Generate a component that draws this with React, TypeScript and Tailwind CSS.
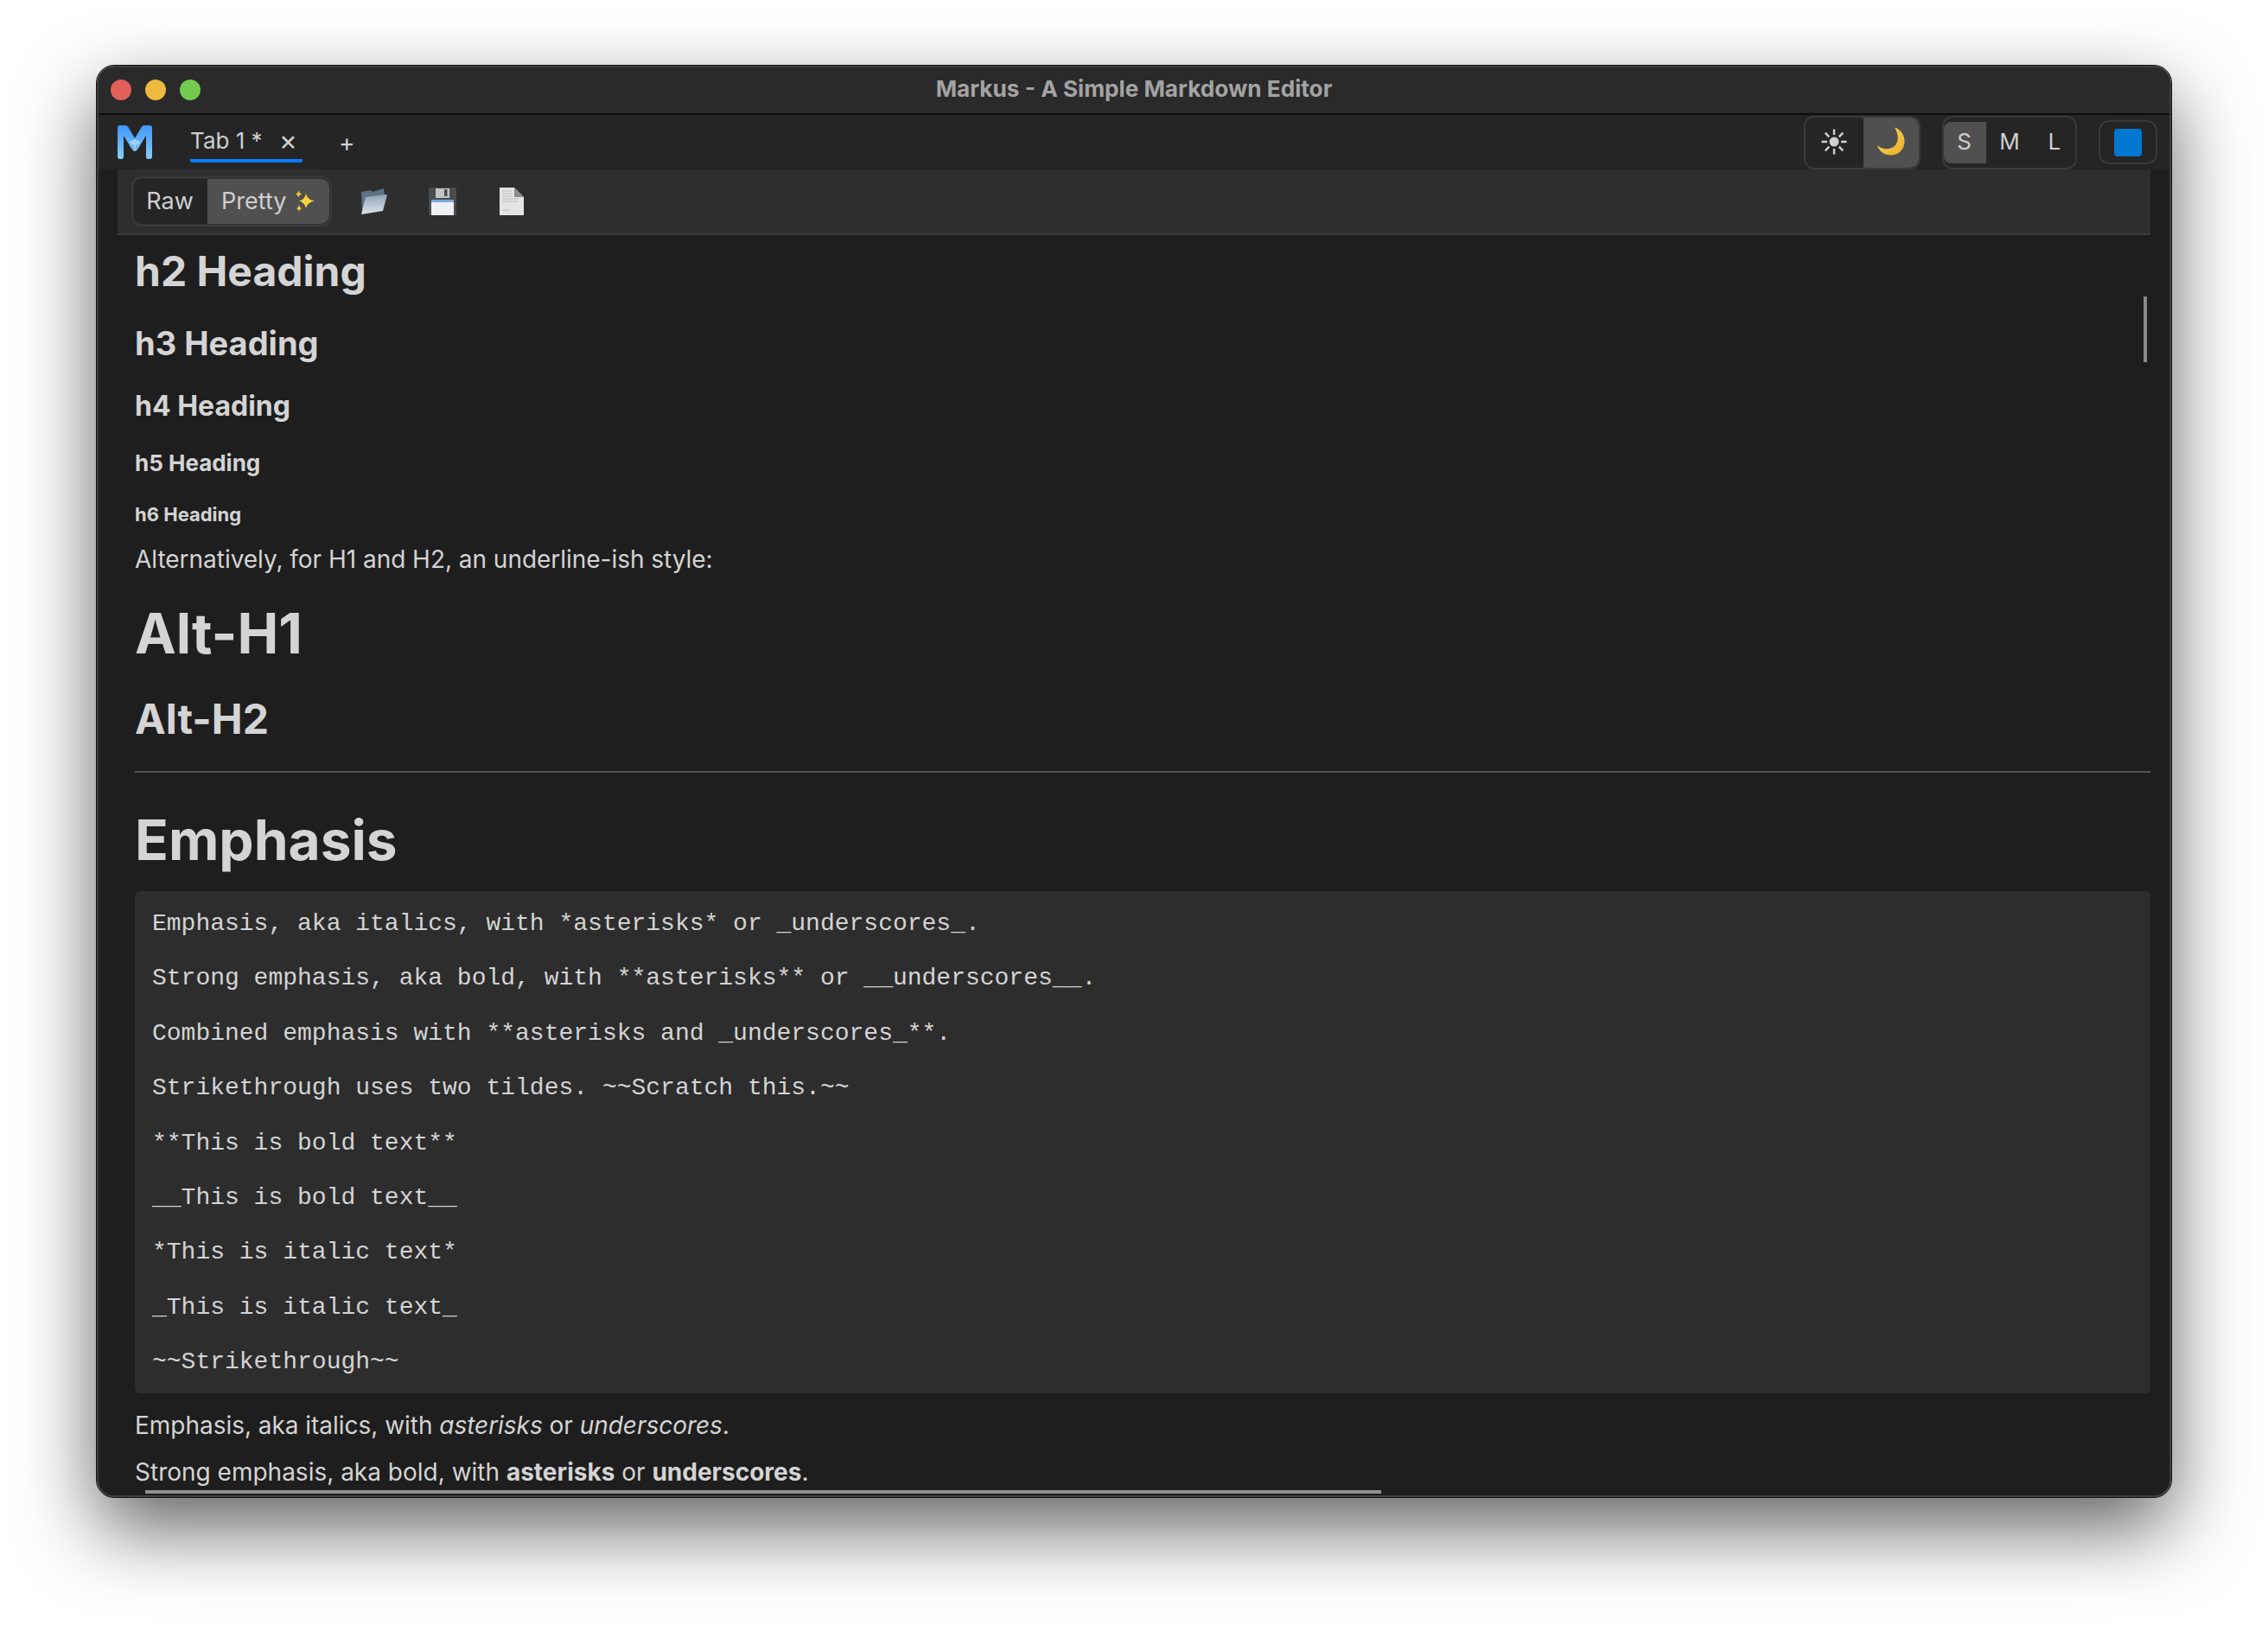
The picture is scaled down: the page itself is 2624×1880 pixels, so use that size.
import React from "react";

const INTER = "font-['Inter',sans-serif]";

function Logo() {
  return (
    <svg width="40" height="39" viewBox="0 0 40 39" className="block">
      <defs>
        <linearGradient id="mg" x1="0" y1="0" x2="0" y2="1">
          <stop offset="0" stopColor="#3f96fb" />
          <stop offset="1" stopColor="#86d0fb" />
        </linearGradient>
        <linearGradient id="gem" x1="0" y1="0" x2="0" y2="1">
          <stop offset="0" stopColor="#a6dcff" />
          <stop offset="1" stopColor="#4fa6ee" />
        </linearGradient>
      </defs>
      <path d="M0 2.5 Q0 0 2.5 0 H9.5 Q11 0 12 1.5 L20 15 L28 1.5 Q29 0 30.5 0 H37.5 Q40 0 40 2.5 V36 Q40 39 37 39 H35.5 Q33 39 33 36 V12 L23 28 Q20 32 17 28 L7 12 V36 Q7 39 4.5 39 H3 Q0 39 0 36 Z" fill="url(#mg)" />
      <path d="M20 16 L25.5 19 V24.5 L20 29 L14.5 24.5 V19 Z" fill="url(#gem)" />
      <path d="M20 21.5 L25.5 19 M20 21.5 L14.5 19 M20 21.5 V29" stroke="#d7f0ff" strokeWidth="0.8" fill="none" />
    </svg>
  );
}

function Sun() {
  return (
    <svg width="30" height="30" viewBox="0 0 30 30" className="block">
      <circle cx="15" cy="15" r="5.5" fill="#d0d0d0" />
      <path d="M15 0.5 V7 M15 23 V29.5 M0.5 15 H7 M23 15 H29.5 M4.7 4.7 L9.3 9.3 M20.7 20.7 L25.3 25.3 M4.7 25.3 L9.3 20.7 M20.7 9.3 L25.3 4.7" stroke="#d0d0d0" strokeWidth="2.4" />
    </svg>
  );
}

function Moon() {
  return (
    <svg width="34" height="34" viewBox="0 0 34 34" className="block">
      <defs>
        <linearGradient id="moon" x1="0" y1="0" x2="1" y2="1">
          <stop offset="0" stopColor="#fbe36a" />
          <stop offset="1" stopColor="#e9a91f" />
        </linearGradient>
      </defs>
      <path d="M21 0.5 C28 3 33 9.5 32.5 17.5 C32 27 24 33 16 32.5 C9 32 3.5 28.5 1 21.5 C6 25.5 13 26.5 19 23.5 C26 19.5 26.5 9 21 0.5 Z" fill="url(#moon)" />
    </svg>
  );
}

function Sparkles() {
  return (
    <svg width="24" height="26" viewBox="0 0 24 26" className="block">
      <path d="M13 4 Q14.5 11 23 12.5 Q14.5 14 13 21 Q11.5 14 5 12.5 Q11.5 11 13 4 Z" fill="#fbd23d" />
      <path d="M4.5 0.5 Q5 3.7 8 4.5 Q5 5.3 4.5 8.5 Q4 5.3 1 4.5 Q4 3.7 4.5 0.5 Z" fill="#f7c536" />
      <path d="M5 17 Q5.5 20 8 21 Q5.5 22 5 25 Q4.5 22 2 21 Q4.5 20 5 17 Z" fill="#f7c536" />
    </svg>
  );
}

function Folder() {
  return (
    <svg width="34" height="32" viewBox="0 0 34 32" className="block">
      <defs>
        <linearGradient id="fold" x1="0" y1="0" x2="0" y2="1">
          <stop offset="0" stopColor="#8fa4b6" />
          <stop offset="1" stopColor="#dde4ea" />
        </linearGradient>
      </defs>
      <path d="M3 5 L14 3 L16 5 L29 1 L30 9 L4 30 Z" fill="#5d7388" />
      <path d="M8 11 L33 8 L28 27 L3 31 Z" fill="url(#fold)" />
    </svg>
  );
}

function Floppy() {
  return (
    <svg width="32" height="32" viewBox="0 0 32 32" className="block">
      <rect x="0" y="0" width="32" height="32" rx="1.5" fill="#4a4b4d" />
      <rect x="8" y="1" width="16" height="11" fill="#c4c5c7" />
      <rect x="18" y="2" width="3.5" height="8" fill="#4a4b4d" />
      <rect x="3" y="14" width="26" height="18" fill="#eef0f4" />
      <rect x="3" y="14" width="26" height="3" fill="#78a9dc" />
    </svg>
  );
}

function Doc() {
  return (
    <svg width="28" height="32" viewBox="0 0 28 32" className="block">
      <path d="M0 0 H17 L28 11 V32 H0 Z" fill="#e4e4e4" />
      <path d="M17 0 L28 11 H17 Z" fill="#8c8c8c" />
      <path d="M3 4 H14 M3 7 H14 M3 10 H14 M3 13 H22 M3 16 H22 M3 26 H12" stroke="#bdbdbd" strokeWidth="1" />
    </svg>
  );
}

const codeLines = [
  "Emphasis, aka italics, with *asterisks* or _underscores_.",
  "Strong emphasis, aka bold, with **asterisks** or __underscores__.",
  "Combined emphasis with **asterisks and _underscores_**.",
  "Strikethrough uses two tildes. ~~Scratch this.~~",
  "**This is bold text**",
  "__This is bold text__",
  "*This is italic text*",
  "_This is italic text_",
  "~~Strikethrough~~",
];

export default function App() {
  return (
    <div className={`w-[2624px] h-[1880px] bg-white overflow-hidden pt-[76px] pl-[112px] ${INTER}`}>
      <div className="relative w-[2400px] h-[1656px] rounded-[20px] overflow-hidden bg-[#1e1e1e] border-2 border-[#3f3f3f] outline outline-1 outline-[#111] shadow-[0_36px_90px_rgba(0,0,0,0.62)] flex flex-col">
        {/* Title bar */}
        <div className="relative h-[55px] shrink-0 bg-[#2a2a2a] border-b-2 border-[#0d0d0d] flex items-center justify-center pb-[2px]">
          <div className="absolute left-[14px] top-[14px] flex gap-[16px]">
            <div className="w-[24px] h-[24px] rounded-full bg-[#e0605a]" />
            <div className="w-[24px] h-[24px] rounded-full bg-[#edb93f]" />
            <div className="w-[24px] h-[24px] rounded-full bg-[#74c94f]" />
          </div>
          <span className="text-[26.2px] font-bold text-[#a3a3a3] leading-none">Markus - A Simple Markdown Editor</span>
        </div>

        {/* Tab bar */}
        <div className="h-[63px] shrink-0 bg-[#252525] flex items-center pl-[22px] pr-[14px] text-[#cfcfcf]">
          <Logo />
          <div className="ml-[44px] w-[130px] h-[47px] border-b-[4px] border-[#0a7cff] rounded-b-[2px] flex items-center justify-between pr-[6px] text-[26px] leading-none">
            <span>Tab 1 *</span>
            <span className="text-[32px] leading-none">×</span>
          </div>
          <span className="ml-[42px] mt-[1px] text-[28px] leading-none">+</span>
          <div className="flex-1" />
          <div className="w-[135px] h-[62px] rounded-[12px] border-2 border-[#3a3a3e] flex items-center overflow-hidden">
            <div className="w-[67px] flex justify-center pr-[2px] pb-[2px]"><Sun /></div>
            <div className="flex-1 h-[58px] bg-[#505050] rounded-r-[10px] flex items-center justify-center pb-[2px]"><Moon /></div>
          </div>
          <div className="ml-[25px] w-[156px] h-[62px] rounded-[12px] border-2 border-[#3a3a3e] flex items-center text-[26px]">
            <div className="w-[50px] h-[48px] bg-[#505050] rounded-l-[8px] flex items-center justify-center pb-[2px] pr-[2px]">S</div>
            <div className="w-[54px] flex justify-center pb-[2px]">M</div>
            <div className="w-[50px] flex justify-center pb-[2px] pl-[1px]">L</div>
          </div>
          <div className="ml-[25px] w-[68px] h-[51px] rounded-[12px] border-2 border-[#3a3a3e] flex items-center justify-center">
            <div className="w-[32px] h-[32px] rounded-[4px] bg-[#0078d0]" />
          </div>
        </div>

        {/* Body */}
        <div className="relative flex-1 min-h-0 overflow-hidden">
          <div className="ml-[22px] mr-[22px] h-[76px] bg-[#2e2e2e] border-b-2 border-[#3b3b40] flex items-center pl-[16px]">
            <div className="w-[232px] h-[58px] rounded-[12px] border-2 border-[#3a3a3e] flex items-center overflow-hidden p-[1px] text-[27px] text-[#cfcfcf]">
              <div className="w-[85px] h-full bg-[#252525] flex items-center justify-center rounded-l-[10px] pr-[2px]">Raw</div>
              <div className="flex-1 h-full bg-[#505050] rounded-r-[10px] flex items-center pl-[16px] gap-[10px]">
                <span>Pretty</span>
                <Sparkles />
              </div>
            </div>
            <div className="ml-[31px]"><Folder /></div>
            <div className="ml-[47px]"><Floppy /></div>
            <div className="ml-[50px]"><Doc /></div>
          </div>

          <div className="ml-[42px] mr-[22px] text-[#d4d4d4]">
            <h2 className="mt-[13px] text-[48px] leading-[58px] font-bold">h2 Heading</h2>
            <h3 className="mt-[31px] text-[38px] leading-[46px] font-bold">h3 Heading</h3>
            <h4 className="mt-[30px] text-[32px] leading-[40px] font-bold">h4 Heading</h4>
            <h5 className="mt-[30px] text-[26px] leading-[32px] font-bold">h5 Heading</h5>
            <h6 className="mt-[30px] text-[22px] leading-[26px] font-bold">h6 Heading</h6>
            <p className="mt-[22px] text-[28px] leading-[34px] tracking-[-0.03px]">Alternatively, for H1 and H2, an underline-ish style:</p>
            <h1 className="mt-[30px] text-[64px] leading-[78px] font-bold">Alt-H1</h1>
            <h2 className="mt-[31px] text-[48px] leading-[58px] font-bold">Alt-H2</h2>
            <hr className="mt-[31px] border-0 h-[2px] bg-[#555]" />
            <h1 className="mt-[39px] text-[64px] leading-[78px] font-bold">Emphasis</h1>
            <pre className="mt-[20px] h-[581px] rounded-[6px] bg-[#2d2d2d] pt-[6px] pl-[20px] font-['Liberation_Mono',monospace] text-[28px] leading-[63.4px] text-[#d4d4d4] overflow-hidden">
              {codeLines.map((l) => (
                <div key={l}>{l}</div>
              ))}
            </pre>
            <p className="mt-[20px] text-[28px] leading-[34px] tracking-[-0.03px]">
              Emphasis, aka italics, with <em>asterisks</em> or <em>underscores</em>.
            </p>
            <p className="mt-[20px] text-[28px] leading-[34px] whitespace-nowrap">
              Strong emphasis, aka bold, with <strong>asterisks</strong> or <strong>underscores</strong>.
            </p>
          </div>

          <div className="absolute right-[26px] top-[147px] w-[4px] h-[76px] bg-[#8a8a8a]" />
          <div className="absolute left-[54px] bottom-[2px] w-[1430px] h-[4px] bg-[#8f8f8f]" />
        </div>
      </div>
    </div>
  );
}
